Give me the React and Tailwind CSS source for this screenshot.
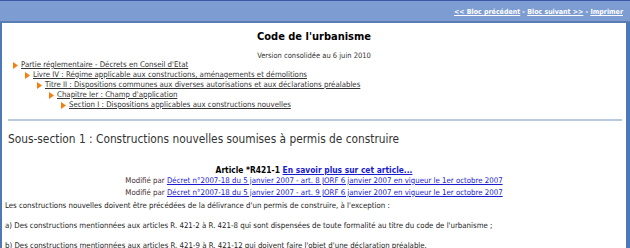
import React from "react";

const tree = [
  "Partie réglementaire - Décrets en Conseil d'Etat",
  "Livre IV : Régime applicable aux constructions, aménagements et démolitions",
  "Titre II : Dispositions communes aux diverses autorisations et aux déclarations préalables",
  "Chapitre Ier : Champ d'application",
  "Section I : Dispositions applicables aux constructions nouvelles",
];

const indents = ["pl-[11px]", "pl-[23px]", "pl-[35px]", "pl-[47px]", "pl-[59px]"];

const Bullet = () => (
  <svg width="5" height="7" viewBox="0 0 5 7" className="shrink-0">
    <path d="M0 0 L5 3.5 L0 7 Z" fill="#f47f10" />
  </svg>
);

export default function App() {
  return (
    <div className="w-[630px] h-[248px] overflow-hidden flex flex-col bg-[#4f79b6] font-['DejaVu_Sans_Condensed','DejaVu_Sans',sans-serif] text-[#333]">
      {/* top bar */}
      <div className="h-[23px] shrink-0 border-t border-[#3e58a8] border-b-2 border-b-[#5a7db3] bg-[#7d9dd2] flex items-start justify-end pr-[7px] pt-[6px]">
        <div className="text-[7px] font-bold text-white leading-[10px]">
          <a href="#" className="underline">&lt;&lt; Bloc précédent</a>
          <span> - </span>
          <a href="#" className="underline">Bloc suivant &gt;&gt;</a>
          <span> - </span>
          <a href="#" className="underline">Imprimer</a>
        </div>
      </div>

      {/* page */}
      <div className="flex-1 ml-[2px] mr-[4px] bg-white flex flex-col">
        <div className="text-center text-[11px] font-bold text-black leading-[14px] mt-[7px]">
          Code de l'urbanisme
        </div>
        <div className="text-center text-[7.5px] leading-[10px] mt-[7px]">
          Version consolidée au 6 juin 2010
        </div>

        <div className="flex flex-col mt-[-1px]">
          {tree.map((t, i) => (
            <div key={i} className={`flex items-center gap-[3px] h-[10px] ${indents[i]}`}>
              <Bullet />
              <a href="#" className="underline text-[7.8px] leading-[10px] text-[#333]">{t}</a>
            </div>
          ))}
        </div>

        <div className="h-[2px] shrink-0 bg-[#b9c9de] ml-[6px] mr-[4px] mt-[9px]" />

        <div className="text-[11.8px] leading-[14px] pl-[6px] mt-[11px] text-[#333]">
          Sous-section 1 : Constructions nouvelles soumises à permis de construire
        </div>

        <div className="text-center text-[8.4px] leading-[10px] font-bold text-black mt-[19px]">
          Article *R421-1{" "}
          <a href="#" className="underline text-[#1a1ad0]">En savoir plus sur cet article...</a>
        </div>
        <div className="flex flex-col items-center text-[7.8px] leading-[12px] text-[#4a3030]">
          <div>
            Modifié par{" "}
            <a href="#" className="underline text-[#1a1ad0]">
              Décret n°2007-18 du 5 janvier 2007 - art. 8 JORF 6 janvier 2007 en vigueur le 1er octobre 2007
            </a>
          </div>
          <div>
            Modifié par{" "}
            <a href="#" className="underline text-[#1a1ad0]">
              Décret n°2007-18 du 5 janvier 2007 - art. 9 JORF 6 janvier 2007 en vigueur le 1er octobre 2007
            </a>
          </div>
        </div>

        <div className="flex flex-col gap-[10px] pl-[3px] mt-[2px] text-[7.8px] leading-[10px] text-[#222]">
          <p>Les constructions nouvelles doivent être précédées de la délivrance d'un permis de construire, à l'exception :</p>
          <p>a) Des constructions mentionnées aux articles R. 421-2 à R. 421-8 qui sont dispensées de toute formalité au titre du code de l'urbanisme ;</p>
          <p>b) Des constructions mentionnées aux articles R. 421-9 à R. 421-12 qui doivent faire l'objet d'une déclaration préalable.</p>
        </div>
      </div>
    </div>
  );
}
